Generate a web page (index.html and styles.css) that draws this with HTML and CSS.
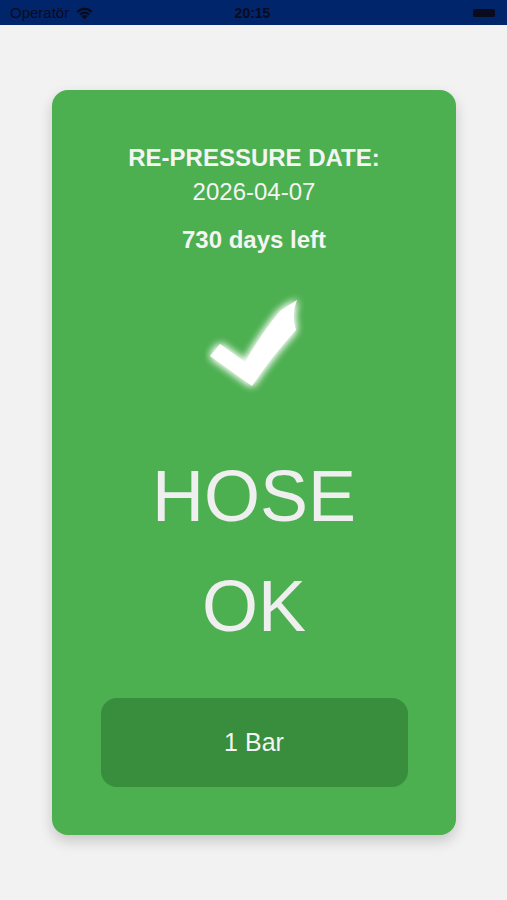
FILE: index.html
```html
<html>
<head>
    <meta charset="UTF-8">
    <meta name="viewport" content="width=device-width, initial-scale=1.0">
    <title>Hose status</title>
    <link rel="stylesheet" href="styles.css">
</head>
<body>
<div class="statusbar">
    <div class="carrier">
        Operatör
        <svg class="wifi" width="19" height="14" viewBox="0 0 16 12">
            <path d="M8 11.5 L5.4 8.8 A3.6 3.6 0 0 1 10.6 8.8 Z" fill="#0b0b1e"/>
            <path d="M3.4 6.7 A6.4 6.4 0 0 1 12.6 6.7 L11.2 8.1 A4.4 4.4 0 0 0 4.8 8.1 Z" fill="#0b0b1e"/>
            <path d="M1.1 4.4 A9.6 9.6 0 0 1 14.9 4.4 L13.5 5.8 A7.6 7.6 0 0 0 2.5 5.8 Z" fill="#0b0b1e"/>
        </svg>
    </div>
    <div class="clock">20:15</div>
    <div class="battery"></div>
</div>
<div class="page">
    <div class="card">
        <div class="label">RE-PRESSURE DATE:</div>
        <div class="date">2026-04-07</div>
        <div class="left">730 days left</div>
        <svg class="check" width="100" height="100" viewBox="0 0 100 100">
            <defs>
                <filter id="glow" x="-30%" y="-30%" width="160%" height="160%">
                    <feGaussianBlur stdDeviation="4" result="b"/>
                    <feMerge>
                        <feMergeNode in="b"/>
                        <feMergeNode in="b"/>
                        <feMergeNode in="SourceGraphic"/>
                    </feMerge>
                </filter>
            </defs>
            <path d="M5 63 L15 51 L40 69 Q58 38 75 18 Q84 12 92 7 Q86 22 91 37 Q68 62 47 93 Z" fill="#ffffff" filter="url(#glow)"/>
        </svg>
        <div class="status">HOSE<br>OK</div>
        <div class="pressure">1 Bar</div>
    </div>
</div>
</body>
</html>
```

FILE: styles.css
```css
*{
    padding: 0;
    margin: 0;
}
body{
    background-color: #f2f2f2;
    font-family: "Liberation Sans", Arial, sans-serif;
}
.statusbar{
    height: 25px;
    background-color: #00256b;
    display: flex;
    align-items: center;
    justify-content: space-between;
    padding: 0 12px 0 10px;
    color: #0b0b1e;
    font-size: 15px;
}
.carrier{
    display: flex;
    align-items: center;
    gap: 6px;
    width: 130px;
}
.clock{
    font-weight: bold;
    font-size: 14px;
}
.battery{
    width: 130px;
    display: flex;
    justify-content: flex-end;
}
.battery::after{
    content: "";
    width: 22px;
    height: 8px;
    border-radius: 2px;
    background-color: #0b0b1e;
}
.page{
    padding: 65px 51px 0 52px;
}
.card{
    background-color: #4caf50;
    border-radius: 16px;
    box-shadow: 0 6px 14px rgba(0, 0, 0, 0.18);
    padding: 54px 0 48px;
    display: flex;
    flex-direction: column;
    align-items: center;
    color: #f4f4f4;
    text-align: center;
}
.label{
    font-size: 24px;
    line-height: 28px;
    font-weight: bold;
}
.date{
    margin-top: 6px;
    font-size: 24px;
    line-height: 28px;
}
.left{
    margin-top: 20px;
    font-size: 24px;
    line-height: 28px;
    font-weight: bold;
}
.check{
    margin-top: 39px;
    margin-left: 2px;
}
.status{
    margin-top: 48px;
    font-size: 72px;
    line-height: 110px;
    color: #efefef;
}
.pressure{
    margin-top: 37px;
    width: 307px;
    height: 89px;
    border-radius: 16px;
    background-color: #388e3c;
    display: flex;
    align-items: center;
    justify-content: center;
    font-size: 25px;
}
```
